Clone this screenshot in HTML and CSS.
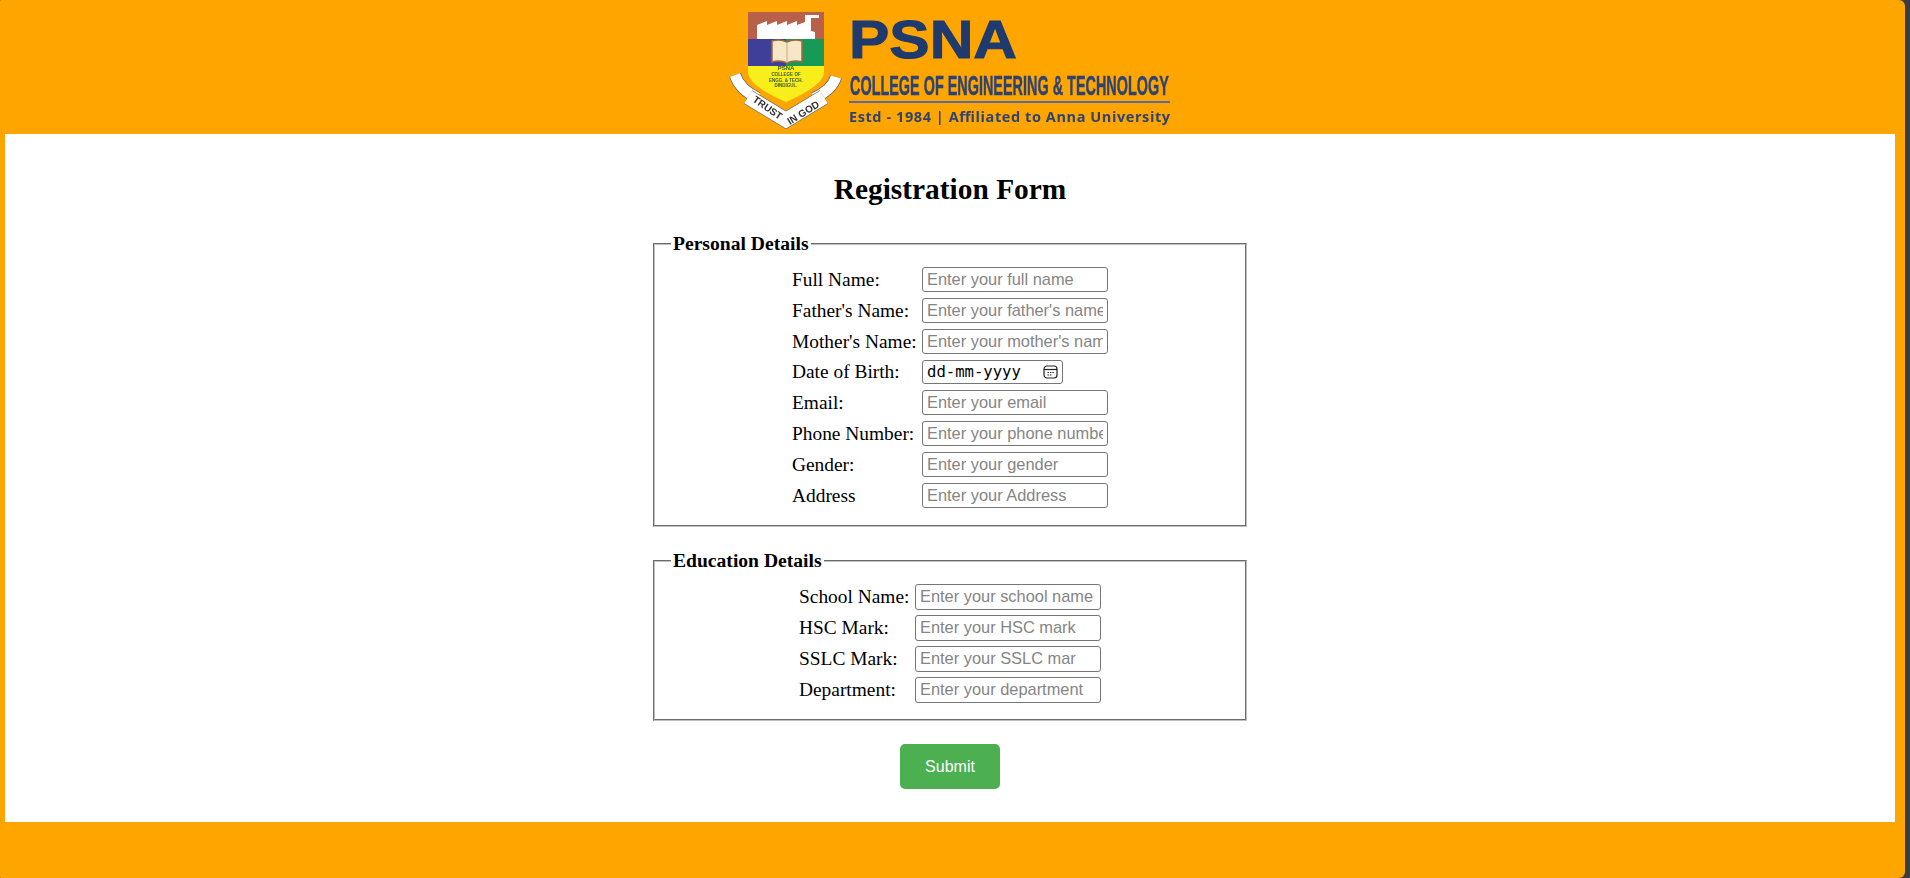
FILE: index.html
```html
<!DOCTYPE html>
<html>
<head>
<meta charset="utf-8">
<title>Registration Form</title>
<link rel="stylesheet" href="styles.css">
</head>
<body>
<div class="page">
  <div class="header">
    <svg class="logo" width="445" height="124" viewBox="0 -6 445 124" xmlns="http://www.w3.org/2000/svg">
      <g class="logo-blur">
        <rect x="20" y="0" width="76" height="27" fill="#b9604a"/>
        <path d="M29 27V13l10-4v4l10-4v4l10-4v4l10-4v4l8-3V3H91V6H83V19l4 1V27z" fill="#fff"/>
        <rect x="20" y="27" width="38" height="27" fill="#3f3f9a"/>
        <rect x="58" y="27" width="38" height="27" fill="#169a55"/>
        <path d="M20 54H96V60C96 72 72 84 58 90C44 84 20 72 20 60Z" fill="#f7ee1b"/>
        <path d="M44 29C50 27 55 28 59 30C63 28 68 27 74 29V50C68 48 63 49 59 51C55 49 50 48 44 50Z" fill="#f7e6c8" stroke="#a3673a" stroke-width="1.5"/>
        <path d="M59 30V51" stroke="#c9a77e" stroke-width="1"/>
        <text x="58" y="58" class="crest-big">PSNA</text>
        <text x="58" y="64" class="crest-small">COLLEGE OF</text>
        <text x="58" y="69.5" class="crest-small">ENGG. &amp; TECH.</text>
        <text x="58" y="75" class="crest-small">DINDIGUL.</text>
        <path class="ribbon-edge" d="M7 63Q12 78 30 86"/>
        <path class="ribbon-fill" d="M7 63Q12 78 30 86"/>
        <path class="ribbon-edge" d="M108 65Q104 78 86 86"/>
        <path class="ribbon-fill" d="M108 65Q104 78 86 86"/>
        <path class="band-edge" d="M20 85L58 108L96 85"/>
        <path class="band-fill" d="M20 85L58 108L96 85"/>
        <text x="24" y="89" class="motto" transform="rotate(35 24 89)">TRUST</text>
        <text x="62" y="113" class="motto" transform="rotate(-32 62 113)">IN GOD</text>
        <text class="psna" transform="translate(121 46) scale(1.12 1)">PSNA</text>
        <text class="college" transform="translate(122 83) scale(.515 1)">COLLEGE OF ENGINEERING &amp; TECHNOLOGY</text>
        <rect x="121" y="89" width="321" height="2" fill="#5a6aa5"/>
        <text x="121" y="110" class="estd" textLength="321" lengthAdjust="spacing">Estd - 1984 | Affiliated to Anna University</text>
      </g>
    </svg>
  </div>
  <div class="container">
    <h2 class="title">Registration Form</h2>
    <form>
      <fieldset class="group">
        <legend>Personal Details</legend>
        <table class="fields">
          <tr><td>Full Name:</td><td><input type="text" placeholder="Enter your full name"></td></tr>
          <tr><td>Father's Name:</td><td><input type="text" placeholder="Enter your father's name"></td></tr>
          <tr><td>Mother's Name:</td><td><input type="text" placeholder="Enter your mother's name"></td></tr>
          <tr><td>Date of Birth:</td><td>
            <div class="date-box"><span>dd-mm-yyyy</span>
              <svg width="15" height="14" viewBox="0 0 15 14" xmlns="http://www.w3.org/2000/svg"><rect x="1" y="1" width="13" height="12" rx="3" fill="none" stroke="#222" stroke-width="1.2"/><path d="M1 4.5H14" stroke="#222" stroke-width="1.2"/><path d="M4.5 7.5h1.4M7 7.5h1.4M9.5 7.5h1.4M4.5 10h1.4M7 10h1.4" stroke="#222" stroke-width="1.1"/></svg>
            </div>
          </td></tr>
          <tr><td>Email:</td><td><input type="email" placeholder="Enter your email"></td></tr>
          <tr><td>Phone Number:</td><td><input type="text" placeholder="Enter your phone number"></td></tr>
          <tr><td>Gender:</td><td><input type="text" placeholder="Enter your gender"></td></tr>
          <tr><td>Address</td><td><input type="text" placeholder="Enter your Address"></td></tr>
        </table>
      </fieldset>
      <fieldset class="group">
        <legend>Education Details</legend>
        <table class="fields edu">
          <tr><td>School Name:</td><td><input type="text" placeholder="Enter your school name"></td></tr>
          <tr><td>HSC Mark:</td><td><input type="text" placeholder="Enter your HSC mark"></td></tr>
          <tr><td>SSLC Mark:</td><td><input type="text" placeholder="Enter your SSLC mar"></td></tr>
          <tr><td>Department:</td><td><input type="text" placeholder="Enter your department"></td></tr>
        </table>
      </fieldset>
      <div class="actions"><button type="button" class="submit">Submit</button></div>
    </form>
  </div>
</div>
</body>
</html>
```

FILE: styles.css
```css
html,body{margin:0;padding:0;height:100%;}
body{background:#3c3c3c;font-family:"Liberation Serif",serif;overflow:hidden;}
.page{height:878px;margin-right:5px;background:#ffa500;border-radius:1px 6px 6px 1px;}
.header{height:134px;display:flex;justify-content:center;padding-top:6px;box-sizing:border-box;}
.logo{display:block;margin-left:-4px;}
.logo-blur{filter:blur(0.5px);}
.crest-big{font:bold 6px "Liberation Sans",sans-serif;fill:#3a5a30;text-anchor:middle;}
.crest-small{font:bold 4.5px "Liberation Sans",sans-serif;fill:#3a5a30;text-anchor:middle;}
.ribbon-edge,.band-edge{fill:none;stroke:#666;}
.ribbon-fill,.band-fill{fill:none;stroke:#fff;}
.ribbon-edge{stroke-width:12;}
.ribbon-fill{stroke-width:10.5;}
.band-edge{stroke-width:16;}
.band-fill{stroke-width:14.5;}
.motto{font:bold 10px "Liberation Sans",sans-serif;fill:#333;}
.psna{font:bold 54px "Liberation Sans",sans-serif;fill:#1f3a6e;stroke:#1f3a6e;stroke-width:1;}
.college{font:bold 28px "Liberation Sans",sans-serif;fill:#2f4373;stroke:#2f4373;stroke-width:.5;}
.estd{font:bold 14.5px "Open Sans",sans-serif;fill:#2f4373;}
.container{margin:0 10px 0 5px;height:688px;background:#fff;overflow:hidden;}
.title{margin:39px 0 27px;text-align:center;font-size:29.4px;line-height:33px;font-weight:bold;}
.group{margin:0 auto 23px;padding:8px 16px 13px;box-sizing:border-box;width:594px;border:2px groove #c0c0c0;}
.group legend{font-size:19.6px;font-weight:bold;padding:0 2px;}
.fields{margin:0 auto;font-size:19.4px;border-spacing:2px;}
.fields td{padding:2px 1px;white-space:nowrap;}
.fields td:first-child{width:126px;}
.fields input{display:block;width:186px;height:25px;box-sizing:border-box;padding:1px 4px;font:16.4px "Liberation Sans",sans-serif;border:1px solid #767676;border-radius:3px;}
.fields input::placeholder{color:#858585;}
.edu td{padding:1.5px 1px;}
.edu td:first-child{width:112px;}
.edu input{height:26px;}
.date-box{width:141px;height:24px;box-sizing:border-box;border:1px solid #767676;border-radius:3px;display:flex;align-items:center;justify-content:space-between;padding:0 4px;font:15.6px "DejaVu Sans Mono",monospace;}
.actions{text-align:center;}
.submit{width:100px;height:45px;background:#4caf50;color:#fff;border:0;border-radius:5px;font:16px "Liberation Sans",sans-serif;}
```
